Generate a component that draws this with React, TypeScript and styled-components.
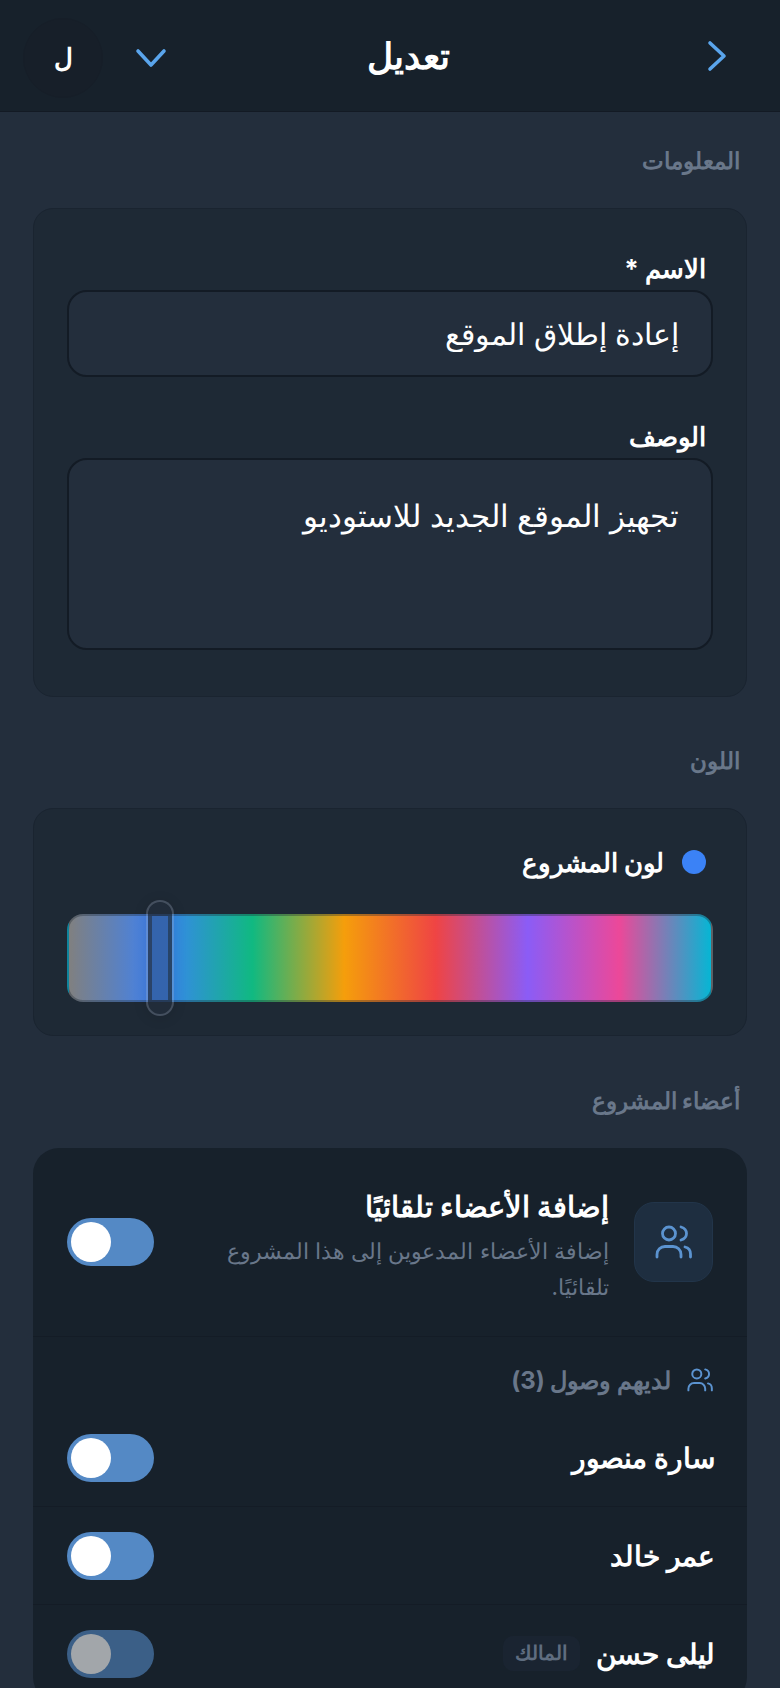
import * as React from 'react'

import styled, { createGlobalStyle } from 'styled-components'

const GlobalStyle = createGlobalStyle`
  html, body {
    margin: 0;
    height: 100%;
    overflow: hidden;
    background: #232e3c;
  }
  * {
    box-sizing: border-box;
  }
`

const Page = styled.div`
  direction: rtl;
  width: 780px;
  height: 1688px;
  overflow: hidden;
  background: #232e3c;
  font-family: Inter, "Noto Sans", sans-serif;
  color: #fff;
`

const Header = styled.header`
  display: flex;
  align-items: center;
  justify-content: space-between;
  height: 112px;
  padding: 0 53px 0 23px;
  background: #17212b;
  border-bottom: 1px solid #131a24;
`

const HeaderSide = styled.div`
  display: flex;
  align-items: center;
  width: 77px;
`

const Title = styled.h1`
  margin: 0;
  font-size: 36px;
  font-weight: 700;
  line-height: 44px;
`

const LeftGroup = styled.div`
  display: flex;
  align-items: center;
  gap: 32px;
  margin-top: 4px;
`

const Avatar = styled.div`
  display: flex;
  align-items: center;
  justify-content: center;
  width: 80px;
  height: 80px;
  border-radius: 50%;
  background: #171f29;
  border: 1px solid #161e28;
  font-size: 26px;
  font-weight: 700;
`

const Content = styled.main`
  padding: 0 33px;
`

const SectionLabel = styled.h2<{ $top: number }>`
  margin: ${(p) => p.$top}px 0 34px;
  padding-right: 7px;
  font-size: 23px;
  font-weight: 700;
  line-height: 26px;
  color: #69778a;
`

const Card = styled.section`
  padding: 45px 33px 46px;
  background: #1e2935;
  border: 1px solid #1a2430;
  border-radius: 20px;
`

const FieldLabel = styled.label`
  display: block;
  margin: 0 7px 6px 0;
  font-size: 26px;
  font-weight: 700;
  line-height: 30px;
`

const Input = styled.input`
  display: block;
  width: 100%;
  height: 87px;
  margin-bottom: 45px;
  padding: 0 32px;
  background: #232e3c;
  border: 2px solid #131b25;
  border-radius: 20px;
  font: 400 29.5px Inter, "Noto Sans", sans-serif;
  color: #fff;
  outline: none;
`

const TextArea = styled.textarea`
  display: block;
  width: 100%;
  height: 192px;
  padding: 36px 32px;
  background: #232e3c;
  border: 2px solid #131b25;
  border-radius: 20px;
  font: 400 31px/40px Inter, "Noto Sans", sans-serif;
  color: #fff;
  outline: none;
  resize: none;
`

const ColorCard = styled(Card)`
  padding: 38px 33px 33px;
`

const ColorRow = styled.div`
  display: flex;
  align-items: center;
  gap: 18px;
  margin: 0 7px 37px 0;
  height: 30px;
  font-size: 26px;
  font-weight: 700;
`

const Dot = styled.span`
  width: 24px;
  height: 24px;
  border-radius: 50%;
  background: #3b82f6;
`

const Track = styled.div`
  position: relative;
  height: 88px;
  border: 2px solid rgba(30, 41, 53, 0.35);
  border-radius: 16px;
  background: linear-gradient(
    to right,
    #808080,
    #3b82f6,
    #10b981,
    #f59e0b,
    #ef4444,
    #8b5cf6,
    #ec4899,
    #06b6d4
  );
`

const Thumb = styled.div`
  position: absolute;
  top: -16px;
  left: 77px;
  width: 28px;
  height: 116px;
  padding: 0 4px;
  border: 2px solid rgba(148, 163, 184, 0.32);
  border-radius: 14px;
  background: rgba(35, 46, 60, 0.75);
  background-clip: padding-box;
  box-shadow: 0 2px 14px rgba(0, 0, 0, 0.12);
`

const ThumbBand = styled.div`
  height: 84px;
  margin-top: 14px;
  background: #3464ad;
`

const MembersCard = styled.section`
  background: #17212b;
  border-radius: 26px;
`

const AutoRow = styled.div`
  display: flex;
  align-items: center;
  height: 189px;
  padding: 0 34px;
  gap: 25px;
  border-bottom: 1px solid #141c26;
`

const IconBox = styled.div`
  display: flex;
  align-items: center;
  justify-content: center;
  flex: none;
  width: 79px;
  height: 80px;
  background: #1e2e40;
  border: 1px solid #22354a;
  border-radius: 20px;
  color: #5b93d0;
`

const AutoText = styled.div`
  flex: 1;
  margin-top: 10px;
`

const AutoTitle = styled.div`
  font-size: 29px;
  font-weight: 700;
  line-height: 36px;
  margin-bottom: 8px;
`

const AutoSub = styled.div`
  max-width: 400px;
  font-size: 22.4px;
  line-height: 36px;
  color: #69778a;
`

const Toggle = styled.div<{ $dim?: boolean }>`
  position: relative;
  flex: none;
  width: 87px;
  height: 48px;
  border-radius: 24px;
  background: #5489c5;
  opacity: ${(p) => (p.$dim ? 0.6 : 1)};
`

const Knob = styled.span`
  position: absolute;
  top: 4px;
  left: 4px;
  width: 40px;
  height: 40px;
  border-radius: 50%;
  background: #fff;
`

const AccessHead = styled.div`
  display: flex;
  align-items: center;
  gap: 16px;
  height: 72px;
  padding: 14px 34px 0;
  font-size: 24px;
  font-weight: 700;
  color: #5b93d0;
`

const AccessText = styled.span`
  color: #69778a;
`

const MemberRow = styled.div`
  display: flex;
  align-items: center;
  justify-content: space-between;
  height: 98px;
  padding: 0 34px;
  border-bottom: 1px solid #141c26;
`

const MemberName = styled.div`
  display: flex;
  align-items: center;
  gap: 16px;
  margin-right: -2px;
  font-size: 28px;
  font-weight: 700;
`

const Badge = styled.span`
  padding: 3px 12px;
  background: #1a2431;
  border-radius: 10px;
  font-size: 20px;
  font-weight: 700;
  line-height: 29px;
  color: #5f6d80;
`

const Chevron = ({ points, w, h }: { points: string; w: number; h: number }) => (
  <svg width={w} height={h} viewBox={`0 0 ${w} ${h}`} fill="none" stroke="#5aa5ec" strokeWidth="3.6" strokeLinecap="round" strokeLinejoin="round">
    <polyline points={points} />
  </svg>
)

const PeopleIcon = ({ scale }: { scale: number }) => (
  <svg width={37 * scale} height={34 * scale} viewBox="0 0 37 34" fill="none" stroke="currentColor" strokeWidth="2.8" strokeLinecap="round" strokeLinejoin="round">
    <circle cx="14" cy="8.5" r="6.5" />
    <path d="M2 32v-2.500a8 8 0 0 1 8-8h8a8 8 0 0 1 8 8v2.500" />
    <path d="M26 2c3.500 1 5.500 3.500 5.500 6.500s-2 5.500-5.500 6.500" />
    <path d="M30 22c3.500.8 5.500 3.500 5.500 7v3" />
  </svg>
)

const Switch = ({ dim }: { dim?: boolean }) => (
  <Toggle $dim={dim}>
    <Knob />
  </Toggle>
)

export default function App() {
  return (
    <Page>
      <GlobalStyle />
      <Header>
        <HeaderSide>
          <Chevron w={20} h={32} points="3,3 17,16 3,29" />
        </HeaderSide>
        <Title>تعديل</Title>
        <LeftGroup>
          <Chevron w={32} h={20} points="3,3 16,17 29,3" />
          <Avatar>ل</Avatar>
        </LeftGroup>
      </Header>
      <Content>
        <SectionLabel $top={36}>المعلومات</SectionLabel>
        <Card>
          <FieldLabel>الاسم *</FieldLabel>
          <Input readOnly value="إعادة إطلاق الموقع" />
          <FieldLabel>الوصف</FieldLabel>
          <TextArea readOnly value="تجهيز الموقع الجديد للاستوديو" />
        </Card>
        <SectionLabel $top={51}>اللون</SectionLabel>
        <ColorCard>
          <ColorRow>
            <Dot />
            لون المشروع
          </ColorRow>
          <Track>
            <Thumb>
              <ThumbBand />
            </Thumb>
          </Track>
        </ColorCard>
        <SectionLabel $top={52}>أعضاء المشروع</SectionLabel>
        <MembersCard>
          <AutoRow>
            <IconBox>
              <PeopleIcon scale={1} />
            </IconBox>
            <AutoText>
              <AutoTitle>إضافة الأعضاء تلقائيًا</AutoTitle>
              <AutoSub>إضافة الأعضاء المدعوين إلى هذا المشروع تلقائيًا.</AutoSub>
            </AutoText>
            <Switch />
          </AutoRow>
          <AccessHead>
            <PeopleIcon scale={0.7} />
            <AccessText>لديهم وصول (3)</AccessText>
          </AccessHead>
          <MemberRow>
            <MemberName>سارة منصور</MemberName>
            <Switch />
          </MemberRow>
          <MemberRow>
            <MemberName>عمر خالد</MemberName>
            <Switch />
          </MemberRow>
          <MemberRow>
            <MemberName>
              ليلى حسن
              <Badge>المالك</Badge>
            </MemberName>
            <Switch dim />
          </MemberRow>
        </MembersCard>
      </Content>
    </Page>
  )
}
